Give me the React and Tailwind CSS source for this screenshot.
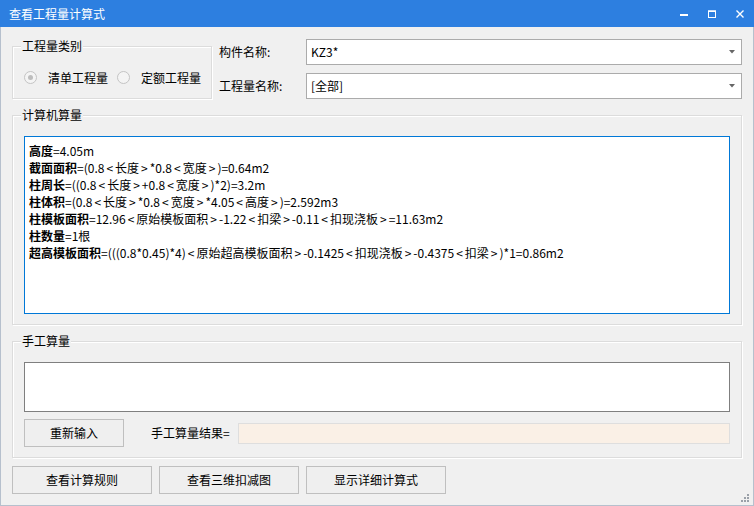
import React from 'react';

const font = "font-['Microsoft_YaHei','Noto_Sans_CJK_SC',sans-serif]";

const lines = [
  ['高度', '=4.05m'],
  ['截面面积', '=(0.8<长度>*0.8<宽度>)=0.64m2'],
  ['柱周长', '=((0.8<长度>+0.8<宽度>)*2)=3.2m'],
  ['柱体积', '=(0.8<长度>*0.8<宽度>*4.05<高度>)=2.592m3'],
  ['柱模板面积', '=12.96<原始模板面积>-1.22<扣梁>-0.11<扣现浇板>=11.63m2'],
  ['柱数量', '=1根'],
  ['超高模板面积', '=(((0.8*0.45)*4)<原始超高模板面积>-0.1425<扣现浇板>-0.4375<扣梁>)*1=0.86m2'],
];

const Expr = ({ text }) =>
  text.split(/([<>])/).map((part, i) =>
    part === '<' || part === '>' ? (
      <span key={i} className="inline-block mx-[2px]">
        {part}
      </span>
    ) : (
      <React.Fragment key={i}>{part}</React.Fragment>
    )
  );

const Group = ({ title, className, children }) => (
  <div
    className={`relative border border-[#dcdcdc] shadow-[inset_1px_1px_0_#ffffff,1px_1px_0_#ffffff] ${className}`}
  >
    <span className="absolute left-[8px] top-[-8px] px-[1px] bg-[#f0f0f0] leading-[14px] text-black">
      {title}
    </span>
    {children}
  </div>
);

const Radio = ({ checked }) => (
  <span className="w-[13px] h-[13px] rounded-full border border-[#c4c4c4] bg-[#f4f4f4] flex items-center justify-center shrink-0">
    {checked && <span className="w-[5px] h-[5px] rounded-full bg-[#bdbdbd]" />}
  </span>
);

const Combo = ({ value }) => (
  <div className="w-[436px] h-[26px] border border-[#ababab] bg-white flex items-center justify-between pl-[4px] pr-[6px]">
    <span>{value}</span>
    <svg width="6" height="4" viewBox="0 0 6 4">
      <path d="M0 0H6L3 3.5Z" fill="#666" />
    </svg>
  </div>
);

const Button = ({ children, className }) => (
  <button className={`h-[28px] border border-[#bfbfbf] bg-[#efefef] text-black flex items-center justify-center ${className}`}>
    {children}
  </button>
);

export default function App() {
  return (
    <div className={`w-[754px] h-[506px] flex flex-col text-[12px] text-black ${font}`}>
      <div className="h-[27px] bg-[#2d7fe0] flex items-center justify-between text-white">
        <span className="pl-[9px] leading-[14px]">查看工程量计算式</span>
        <div className="flex">
          <div className="w-[28px] h-[27px] flex items-center justify-center">
            <svg width="8" height="8" viewBox="0 0 8 8">
              <rect x="0" y="4" width="8" height="2" fill="#fff" />
            </svg>
          </div>
          <div className="w-[28px] h-[27px] flex items-center justify-center">
            <svg width="8" height="8" viewBox="0 0 8 8">
              <rect x="0.5" y="1" width="7" height="6.5" fill="none" stroke="#fff" strokeWidth="1" />
              <rect x="0" y="0.5" width="8" height="1.5" fill="#fff" />
            </svg>
          </div>
          <div className="w-[28px] h-[27px] flex items-center justify-center">
            <svg width="8" height="8" viewBox="0 0 8 8">
              <path d="M0.5 0.5L7.5 7.5M7.5 0.5L0.5 7.5" stroke="#fff" strokeWidth="1.4" />
            </svg>
          </div>
        </div>
      </div>

      <div className="flex-1 relative bg-[#f0f0f0] border-x border-b border-[#b6c0cd] pt-[12px] pl-[11px]">
        <div className="flex items-start">
          <Group title="工程量类别" className="mt-[7px] w-[200px] h-[53px]">
            <div className="flex items-center pl-[11px] pt-[22px] leading-[14px]">
              <Radio checked />
              <span className="ml-[11px] mt-[2px]">清单工程量</span>
              <span className="ml-[9px]">
                <Radio />
              </span>
              <span className="ml-[11px] mt-[2px]">定额工程量</span>
            </div>
          </Group>
          <div className="ml-[7px] flex flex-col gap-[8px]">
            <div className="flex items-center">
              <span className="w-[87px]">构件名称:</span>
              <Combo value="KZ3*" />
            </div>
            <div className="flex items-center">
              <span className="w-[87px]">工程量名称:</span>
              <Combo value="[全部]" />
            </div>
          </div>
        </div>

        <Group title="计算机算量" className="mt-[16px] w-[730px] h-[210px] px-[11px] pt-[20px]">
          <div className="w-[706px] h-[178px] border border-[#0078d7] bg-white pl-[4px] pt-[5px] leading-[17px]">
            {lines.map(([k, v]) => (
              <div key={k} className="whitespace-nowrap">
                <span className="font-bold">{k}</span>
                <Expr text={v} />
              </div>
            ))}
          </div>
        </Group>

        <Group title="手工算量" className="mt-[16px] w-[730px] h-[117px] px-[11px] pt-[20px]">
          <div className="w-[706px] h-[50px] border border-[#7f7f7f] bg-white" />
          <div className="mt-[7px] flex items-center">
            <Button className="w-[100px]">重新输入</Button>
            <span className="ml-[27px] w-[87px]">手工算量结果=</span>
            <div className="w-[492px] h-[21px] border border-[#dedede] bg-[#faf0e6]" />
          </div>
        </Group>

        <div className="mt-[8px] flex gap-[7px]">
          <Button className="w-[140px]">查看计算规则</Button>
          <Button className="w-[140px]">查看三维扣减图</Button>
          <Button className="w-[140px]">显示详细计算式</Button>
        </div>

        <svg className="absolute right-[4px] bottom-[3px]" width="8" height="8" viewBox="0 0 8 8">
          <rect x="6" y="0" width="2" height="2" fill="#9aa0a8" />
          <rect x="3" y="3" width="2" height="2" fill="#9aa0a8" />
          <rect x="6" y="3" width="2" height="2" fill="#9aa0a8" />
          <rect x="0" y="6" width="2" height="2" fill="#9aa0a8" />
          <rect x="3" y="6" width="2" height="2" fill="#9aa0a8" />
          <rect x="6" y="6" width="2" height="2" fill="#9aa0a8" />
        </svg>
      </div>
    </div>
  );
}
